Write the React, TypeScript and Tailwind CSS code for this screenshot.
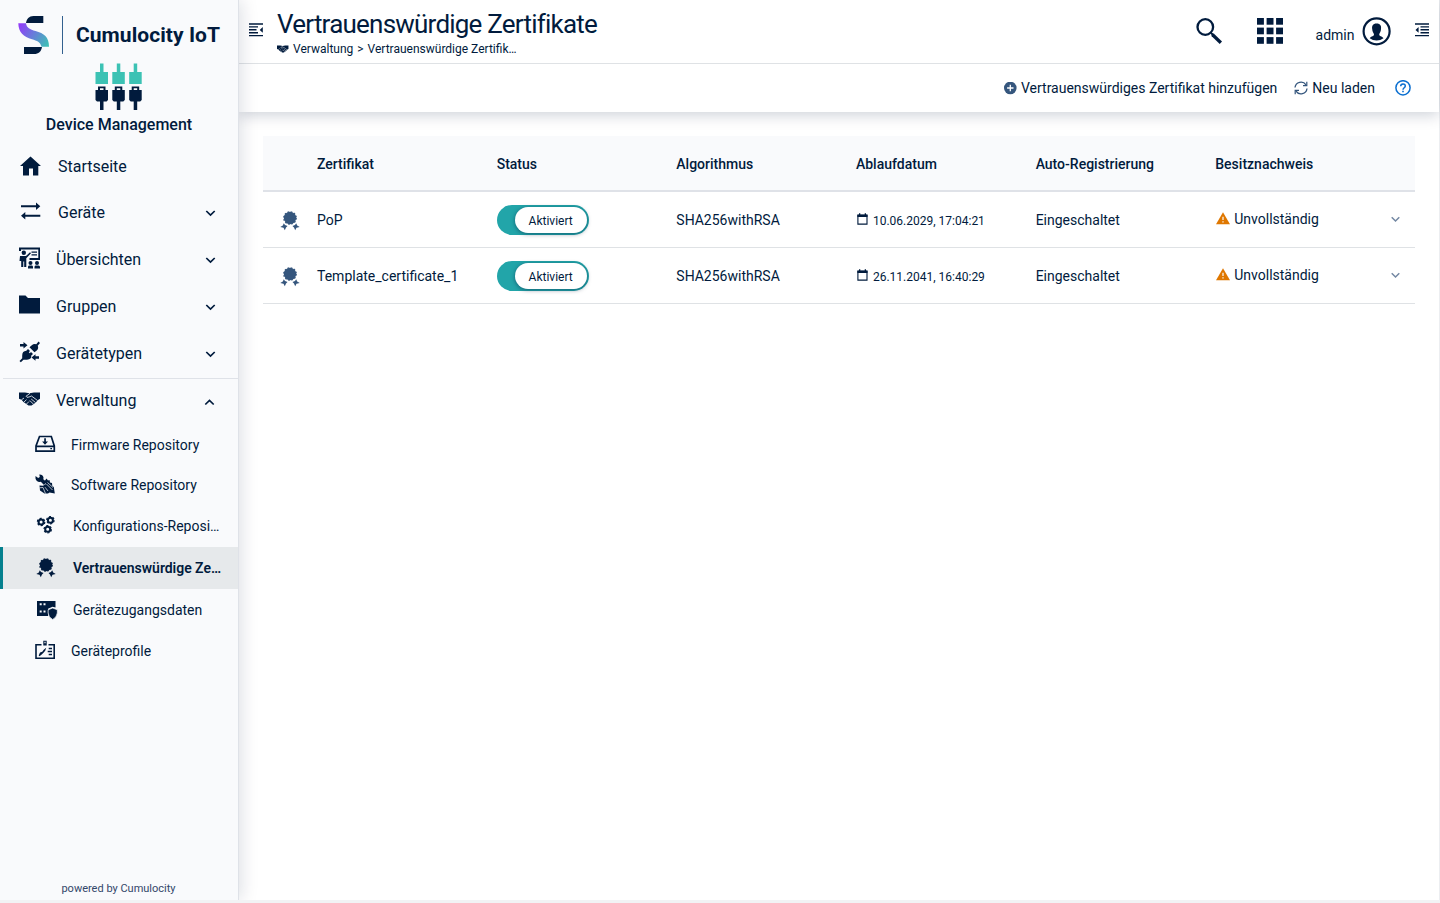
import type { ReactNode } from 'react';

type IconProps = { className?: string };

function Svg({ w, h, className = '', children }: { w: number; h: number; className?: string; children: ReactNode }) {
  return (
    <svg width={w} height={h} viewBox={`0 0 ${w} ${h}`} fill="currentColor" className={`shrink-0 ${className}`}>
      {children}
    </svg>
  );
}

const BrandMark = () => (
  <Svg w={32} h={38}>
    <defs>
      <linearGradient id="brand" x1="0" y1="9" x2="31" y2="29" gradientUnits="userSpaceOnUse">
        <stop offset="0" stopColor="#9438fa" />
        <stop offset="0.45" stopColor="#6a78dc" />
        <stop offset="1" stopColor="#3cc2b4" />
      </linearGradient>
    </defs>
    <path d="M8 7C8.500 3 11 0 15.500 0H25.300V7Z" fill="#011b3d" />
    <path d="M0.300 7.300H8C8.500 12 12 13.500 17.500 15C26 17.300 31 21 31 30.700H23.500C22.500 26 19 24.700 14 23.200C5.500 20.800 0.500 16.500 0.300 7.300Z" fill="url(#brand)" />
    <path d="M6 31H24C23.300 35.500 20.500 38 16 38H6Z" fill="#011b3d" />
  </Svg>
);

const DeviceMark = () => (
  <Svg w={48} h={48}>
    {[0.5, 17.3, 34.2].map((x) => (
      <g key={x} transform={`translate(${x} 0)`}>
        <path d="M4.500 0.500H8V9H12.500V21H0V9H4.500Z" fill="#3cc2b4" />
        <path d="M2.500 23.500H10V27H12.500V37L11 38.500H8V47H4.500V38.500H1.500L0 37V27H2.500ZM4.500 25.200V27H8V25.200Z" fill="#011b3d" fillRule="evenodd" />
      </g>
    ))}
  </Svg>
);

const HomeIcon = () => (
  <Svg w={22} h={20}>
    <path d="M11.500 0.500L22 10H19.300V19.500H14V12.500H10V19.500H4V10H1Z" />
  </Svg>
);
const SwapIcon = () => (
  <Svg w={22} h={18} className="mb-[3px]">
    <path d="M1 3.300H16V0.500L20.300 4.300L16 8V5.300H1ZM20.300 12.700H5.300V10L1 13.700L5.300 17.500V14.700H20.300Z" />
  </Svg>
);
const BoardIcon = () => (
  <Svg w={22} h={22} className="mb-[3px]">
    <path d="M0 0.500H21V13H10.500V11H19.300V2.500H2V4H0Z" />
    <circle cx="4.800" cy="5.800" r="2.200" />
    <path d="M1 9H7L11 5.200L12 6.300L7.300 11.200V20H5.200V14.500H4.300V20H2.200V14H0.500Z" />
    <path d="M12.500 4.500H18V5.700H12.500ZM12.500 7.200H18V8.400H12.500Z" />
    <circle cx="11.500" cy="16" r="2" />
    <circle cx="18" cy="16" r="2" />
    <path d="M9 21.500V20Q9 18.500 10 18.500H13Q14 18.500 14 20V21.500ZM15.500 21.500V20Q15.500 18.500 16.500 18.500H19.500Q21 18.500 21 20V21.500Z" />
  </Svg>
);
const FolderIcon = () => (
  <Svg w={22} h={19} className="mb-1">
    <path d="M0 0.500H6.500L9 3H21V18.500H0Z" />
  </Svg>
);
const PlugIcon = () => (
  <Svg w={22} h={22} className="mb-[3px]">
    <path d="M19.500 0.500L21 2L18.700 4.700Q20 7.500 17.700 9.500L15.500 11.300L10.500 6.300L12.800 4.200Q14.800 2.400 17.300 3.200ZM9 8L11 10L9.800 11.200L10.800 12.200L12 11L14 13L12.300 14.500Q12.800 18.500 8 18.700H4.500L1.800 21.300L0.500 20L3.200 17.300V14.500Q3.200 10 7.300 9.700Z" />
    <path d="M1 3.100H4.500V1L8.500 4.300L4.500 7.500V5.500H1ZM20 15.300H16.500V13.200L12.500 16.500L16.500 19.700V17.700H20Z" />
  </Svg>
);
const HandshakeIcon = ({ className = '', line = '#f9fafc' }: { className?: string; line?: string }) => (
  <svg viewBox="0 0 22 14" fill="currentColor" className={`shrink-0 ${className}`}>
    <path d="M0 0.500H6L10.500 1.300L15 0.500H21V6.800L19 8L16.500 10.800L12.500 13.500H9.500L4.500 10L2.500 7.800L0 6.800Z" />
    <path d="M11 1.300L7 4.300Q7.500 6 10 5L12.500 4L18.500 8.500M2.500 7.800L5 6M5 10L7.500 7.700M7.500 12L10 9.500M12.200 7L16.500 10.500M10.800 8.500L14.300 12" fill="none" stroke={line} strokeWidth="0.800" />
  </svg>
);

const DriveIcon = () => (
  <Svg w={22} h={18} className="mb-0.5">
    <path d="M4.500 1.500H16.300L19.300 11V16.200H1V11ZM1 11.300H19.300" fill="none" stroke="currentColor" strokeWidth="1.700" />
    <path d="M9.200 3.300H10.900V6.500H13L10 9.700L7.100 6.500H9.200ZM15.300 13H17V14.300H15.300Z" />
  </Svg>
);
const ToolsIcon = () => (
  <Svg w={22} h={20} className="mb-0.5">
    <path d="M0.500 2L3.200 4L4.800 3L4.300 0.500Q7.800 0.300 8.500 3.500L8.300 5.300L11.500 8L9 11L5.800 7.800Q1.500 8.500 0.500 4.500Z" />
    <path d="M4.500 11.500L8 11.700L11 10L9.300 7.500L11.500 4.500L13 6.500L14.500 6L15 8.500L17 9L17.300 12L18.800 13L19.800 19.500L14.500 18.500L13 19.500H9.500L5 16.500Z" />
    <path d="M4.500 13.800L8 13.500L10.500 19.500M10 13.200L13 17M11.500 10L17.500 16M12.500 8.500L18 13.500" stroke="#f9fafc" strokeWidth="0.700" fill="none" />
  </Svg>
);
const Gear = ({ x, y }: { x: number; y: number }) => (
  <g transform={`translate(${x} ${y})`} fill="none" stroke="currentColor">
    <circle r="2.500" strokeWidth="2" />
    <circle r="3.700" strokeWidth="1.200" strokeDasharray="2.100 1.774" />
  </g>
);
const GearsIcon = () => (
  <Svg w={20} h={20} className="mb-0.5">
    <Gear x={5.1} y={7} />
    <Gear x={14.4} y={5.2} />
    <Gear x={11.7} y={14.3} />
  </Svg>
);
const RosetteIcon = ({ className = '' }: IconProps) => (
  <Svg w={20} h={20} className={className}>
    <circle cx="10" cy="7" r="6.200" />
    <circle cx="10" cy="7" r="6.200" fill="none" stroke="currentColor" strokeWidth="1.300" strokeDasharray="1.623 1.623" />
    <path d="M3.800 12.300L5 14L7.500 15L6 16.500L4.800 19.300L3.500 16.700L0.300 16L2.800 14.500ZM16.200 12.300L15 14L12.500 15L14 16.500L15.200 19.300L16.500 16.700L19.700 16L17.200 14.500Z" />
  </Svg>
);
const ServerShieldIcon = () => (
  <Svg w={22} h={20}>
    <path d="M0 1H18.500V7.500L15.500 6.800L11 8.700V16H0ZM2.700 3.300V5.300H4.700V3.300ZM6.500 3.300V5.300H8.500V3.300ZM2.700 10.500V12.500H4.700V10.500ZM6.500 10.500V12.500H8.500V10.500Z" fillRule="evenodd" />
    <path d="M15.700 8L20.300 9.800V13Q19.800 17.300 15.700 19.500Q11.400 17.300 11.100 13V9.800Z" stroke="#f9fafc" strokeWidth="0.700" />
  </Svg>
);
const BadgeIcon = () => (
  <Svg w={22} h={20} className="mb-0.5">
    <path d="M6.500 4.800H1V18.200H19.200V4.800H13.500" fill="none" stroke="currentColor" strokeWidth="1.600" />
    <path d="M8.300 0.700H11.700V5.500H8.300ZM9.400 1.800V3.200H10.600V1.800Z" fillRule="evenodd" />
    <path d="M13.700 7.800H17V9.200H13.700ZM12.700 10.800H17V12.200H12.700ZM13.700 13.800H17V15.200H13.700ZM3.700 15.500L5 12.500L7.300 11.700L8.700 9.700L11.200 7.800L10.200 10.700L8.500 12.700L6.700 14.500L4.500 16.300Z" />
  </Svg>
);

const Chevron = ({ up = false, className = '' }: { up?: boolean; className?: string }) => (
  <Svg w={11} h={7} className={className}>
    <path d={up ? 'M1.300 5.500L5.500 1.400L9.700 5.500' : 'M1.300 1L5.500 5.100L9.700 1'} fill="none" stroke="currentColor" strokeWidth="1.700" />
  </Svg>
);

const OutdentIcon = () => (
  <Svg w={14} h={14}>
    <path d="M0 0.300H14V1.700H0ZM0 3.200H9V4.600H0ZM0 6.100H7.500V7.500H0ZM0 9H9V10.400H0ZM0 11.900H14V13.300H0ZM13.800 4V9.800L10.700 6.900Z" />
  </Svg>
);
const IndentIcon = () => (
  <Svg w={14} h={14}>
    <path d="M0 0.300H14V1.700H0ZM5.500 3.200H14V4.600H5.500ZM5.500 6.100H14V7.500H5.500ZM5.500 9H14V10.400H5.500ZM0 11.900H14V13.300H0ZM3.600 4V9.800L0.500 6.900Z" />
  </Svg>
);
const SearchIcon = () => (
  <Svg w={28} h={28}>
    <circle cx="9.300" cy="10" r="7.800" fill="none" stroke="currentColor" strokeWidth="2.300" />
    <path d="M14.500 15L18 16.800L26 24.500L23.700 26.900L15.700 19.200Z" />
  </Svg>
);
const GridIcon = () => (
  <Svg w={26} h={26}>
    {[0, 9.6, 19.1].map((y) =>
      [0, 9.6, 19.1].map((x) => <rect key={`${x}-${y}`} x={x} y={y} width="6.900" height="6.700" />),
    )}
  </Svg>
);
const UserIcon = () => (
  <Svg w={30} h={30}>
    <circle cx="14.600" cy="15.300" r="13" fill="none" stroke="currentColor" strokeWidth="2.200" />
    <path d="M14.600 7.500C18.500 7.500 19.500 10 19 13C19 15.500 17.500 17 17.200 18.500C17.200 20.500 20 20 21.500 22.200Q18.500 24.500 14.600 24.500Q10.700 24.500 7.700 22.200C9.200 20 12 20.500 12 18.500C11.700 17 10.200 15.500 10.200 13C9.700 10 10.700 7.500 14.600 7.500Z" />
  </Svg>
);
const PlusIcon = () => (
  <Svg w={13} h={13}>
    <circle cx="6.300" cy="6" r="6.300" />
    <path d="M6.300 2.800V9.200M3.100 6H9.500" stroke="#fff" strokeWidth="1.300" />
  </Svg>
);
const ReloadIcon = () => (
  <Svg w={14} h={14}>
    <path d="M1 6.500A6 6 0 0 1 12 3.900M13 7.500A6 6 0 0 1 2 10.100" fill="none" stroke="currentColor" strokeWidth="1.300" />
    <path d="M13.400 0.800V5.200H9V4H12.200V0.800ZM0.600 13.200V8.800H5V10H1.800V13.200Z" />
  </Svg>
);
const HelpIcon = () => (
  <Svg w={16} h={16}>
    <circle cx="8" cy="7.800" r="7.100" fill="none" stroke="currentColor" strokeWidth="1.500" />
    <path d="M5.700 6.200C5.700 3.100 10.300 3.200 10.300 6C10.300 7.700 8 7.800 8 9.700" fill="none" stroke="currentColor" strokeWidth="1.500" />
    <path d="M7.200 10.700H8.800V12.300H7.200Z" />
  </Svg>
);
const CalendarIcon = () => (
  <Svg w={11} h={12}>
    <path d="M0.900 2.200H10V11.100H0.900Z" fill="none" stroke="currentColor" strokeWidth="1.100" />
    <path d="M0.400 1.500H10.500V4H0.400ZM2 0.300H3.300V2H2ZM7.700 0.300H9V2H7.700Z" />
  </Svg>
);
const WarningIcon = () => (
  <Svg w={15} h={13}>
    <path d="M8 0.300L15 12.300H1Z" fill="#df7700" />
    <path d="M7.300 4.800H8.700V8.100H7.300ZM7.300 9.300H8.700V10.600H7.300Z" fill="#fff" fillOpacity="0.850" />
  </Svg>
);

const mainItems = [
  { label: 'Startseite', icon: <HomeIcon />, row: 'h-[46px]', pad: 'pl-[19px]', text: 'ml-[17px] pt-0.5', chevron: false },
  { label: 'Geräte', icon: <SwapIcon />, row: 'h-[47px]', pad: 'pl-[20px]', text: 'ml-[16px]', chevron: true },
  { label: 'Übersichten', icon: <BoardIcon />, row: 'h-[47px]', pad: 'pl-[19px]', text: 'ml-[15px]', chevron: true },
  { label: 'Gruppen', icon: <FolderIcon />, row: 'h-[47px]', pad: 'pl-[19px]', text: 'ml-[15px]', chevron: true },
  { label: 'Gerätetypen', icon: <PlugIcon />, row: 'h-[48px] pb-px', pad: 'pl-[19px]', text: 'ml-[15px]', chevron: true },
];

const subItems = [
  { label: 'Firmware Repository', icon: <DriveIcon />, row: 'h-[41px] pl-[35px]', text: 'w-[36px]', active: false },
  { label: 'Software Repository', icon: <ToolsIcon />, row: 'h-[40px] pl-[35px]', text: 'w-[36px]', active: false },
  { label: 'Konfigurations-Reposi…', icon: <GearsIcon />, row: 'h-[42px] pl-[36px]', text: 'w-[37px]', active: false },
  { label: 'Vertrauenswürdige Ze…', icon: <RosetteIcon />, row: 'h-[42px] pl-[33px] border-l-[3px] border-[#05808e] bg-[#e6e9eb]', text: 'w-[37px]', active: true },
  { label: 'Gerätezugangsdaten', icon: <ServerShieldIcon />, row: 'h-[42px] pl-[37px]', text: 'w-[36px]', active: false },
  { label: 'Geräteprofile', icon: <BadgeIcon />, row: 'h-[40px] pl-[35px]', text: 'w-[36px]', active: false },
];

const columns = ['Zertifikat', 'Status', 'Algorithmus', 'Ablaufdatum', 'Auto-Registrierung', 'Besitznachweis'];
const certificates = [
  { name: 'PoP', expires: '10.06.2029, 17:04:21' },
  { name: 'Template_certificate_1', expires: '26.11.2041, 16:40:29' },
];

function Sidebar() {
  return (
    <aside className="relative z-20 flex h-[900px] w-[239px] shrink-0 flex-col border-r border-[#dfe2e8] bg-[#f9fafc] shadow-[3px_0_16px_rgba(1,27,61,0.13)]">
      <div className="flex h-[54px] items-start pt-4 pl-[18px]">
        <BrandMark />
        <div className="ml-3 h-[38px] w-px bg-[#33608f]" />
        <div className="ml-[13px] text-[21px] leading-[38px] font-bold tracking-[0.060px] whitespace-nowrap">Cumulocity IoT</div>
      </div>
      <div className="flex h-[89px] flex-col items-center pt-[9px]">
        <DeviceMark />
        <div className="mt-1 text-base leading-5 font-medium whitespace-nowrap">Device Management</div>
      </div>
      <nav>
        {mainItems.map((item) => (
          <div key={item.label} className={`flex items-center ${item.row} ${item.pad}`}>
            {item.icon}
            <span className={`flex-1 text-base leading-5 ${item.text}`}>{item.label}</span>
            {item.chevron && <Chevron className="mt-0.5 mr-[22px]" />}
          </div>
        ))}
        <div className="ml-[3px] flex h-[46px] items-center border-t border-[#dfe2e8] pb-0.5 pl-4">
          <HandshakeIcon className="mb-[3px] h-[14px] w-[22px]" />
          <span className="ml-[15px] flex-1 text-base leading-5">Verwaltung</span>
          <Chevron up className="mt-[3px] mr-[23px]" />
        </div>
        {subItems.map((item) => (
          <div key={item.label} className={`flex items-center ${item.row}`}>
            <span className={`flex shrink-0 ${item.text}`}>{item.icon}</span>
            <span className={item.active ? 'text-sm font-semibold tracking-[-0.030px] whitespace-nowrap' : 'text-sm whitespace-nowrap'}>{item.label}</span>
          </div>
        ))}
      </nav>
      <div className="mt-auto mr-px pb-[3px] text-center text-[11px] leading-4 text-[#33476a]">powered by Cumulocity</div>
    </aside>
  );
}

function Header() {
  return (
    <header className="relative z-10 h-28 bg-white shadow-[0_3px_14px_rgba(1,27,61,0.2)]">
      <div className="flex h-16 border-b border-[#dfe2e5]">
        <div className="pt-[23px] pl-[10px]">
          <OutdentIcon />
        </div>
        <div className="ml-[14px] flex-1 pt-2">
          <h1 className="text-[26px] leading-8 tracking-[-0.780px] whitespace-nowrap">Vertrauenswürdige Zertifikate</h1>
          <div className="flex h-[17px] items-center text-xs whitespace-nowrap">
            <HandshakeIcon className="h-2 w-3" line="#ffffff" />
            <span className="ml-1">Verwaltung</span>
            <span className="mx-1">&gt;</span>
            <span>Vertrauenswürdige Zertifik…</span>
          </div>
        </div>
        <div className="mt-[17px] mr-[33px]"><SearchIcon /></div>
        <div className="mt-[18px] mr-[32.500px]"><GridIcon /></div>
        <span className="mt-[25px] mr-[7.500px] text-sm">admin</span>
        <div className="mt-4 mr-[23px]"><UserIcon /></div>
        <div className="mt-[23px] mr-[10px]"><IndentIcon /></div>
      </div>
      <div className="flex h-12 items-center justify-end pr-[28px] text-sm whitespace-nowrap">
        <span className="mr-1 text-[#35567d]"><PlusIcon /></span>
        <span className="mr-[17px]">Vertrauenswürdiges Zertifikat hinzufügen</span>
        <span className="mr-1 text-[#35567d]"><ReloadIcon /></span>
        <span className="mr-5">Neu laden</span>
        <span className="text-[#0b6fd0]"><HelpIcon /></span>
      </div>
    </header>
  );
}

function CertificateTable() {
  return (
    <section className="mr-[24px] ml-6 mt-6 text-sm">
      <div className="grid h-14 w-[1152px] grid-cols-[54px_repeat(5,179.660px)_1fr] items-center border-b-2 border-[#dfe2e8] bg-[#f9fafc] pt-0.5 font-medium">
        <span />
        {columns.map((c) => <span key={c}>{c}</span>)}
      </div>
      {certificates.map((cert) => (
        <div key={cert.name} className="grid h-14 w-[1152px] grid-cols-[54px_repeat(5,179.660px)_1fr] items-center border-b border-[#dfe2e5]">
          <span className="pt-[3px] pl-[17px] text-[#35567d]"><RosetteIcon /></span>
          <span className="pt-px">{cert.name}</span>
          <div className="h-[30px] w-[92px] rounded-full bg-[#22a5a9] py-0.5 pr-0.5 pl-[18px]">
            <div className="flex h-[26px] items-center justify-center rounded-full bg-white pt-0.5 text-xs shadow-[0_1px_4px_rgba(1,27,61,0.5)]">Aktiviert</div>
          </div>
          <span className="pt-px">SHA256withRSA</span>
          <span className="flex items-center pt-px pl-px text-xs"><span className="mr-[5px] mb-0.5"><CalendarIcon /></span><span className="pt-0.5">{cert.expires}</span></span>
          <span className="pt-px">Eingeschaltet</span>
          <div className="flex items-center pb-0.5">
            <WarningIcon />
            <span className="ml-1 flex-1">Unvollständig</span>
            <Chevron className="mt-0.5 mr-[14px] scale-90 text-[#7488a3]" />
          </div>
        </div>
      ))}
    </section>
  );
}

export default function App() {
  return (
    <div className="h-[903px] w-[1440px] overflow-hidden bg-[#f2f3f5] font-['Roboto',sans-serif] text-[#011b3d]">
      <div className="flex h-[900px] overflow-hidden">
        <Sidebar />
        <main className="min-w-0 flex-1 border-r border-[#eceef1] bg-white">
          <Header />
          <CertificateTable />
        </main>
      </div>
    </div>
  );
}
